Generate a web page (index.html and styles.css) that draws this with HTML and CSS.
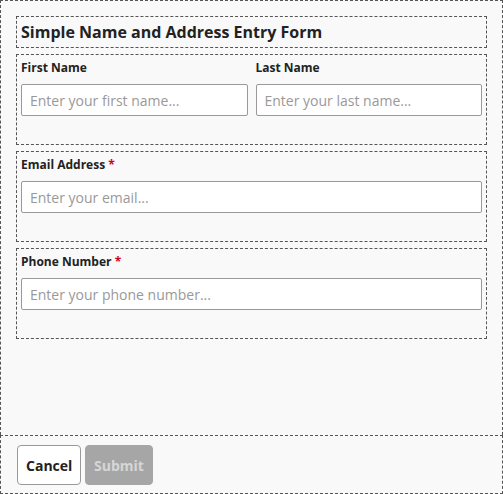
FILE: index.html
```html
<!DOCTYPE html>
<html>
<head>
<meta charset="utf-8">
<link rel="stylesheet" href="styles.css">
</head>
<body>
<div class="app">
  <main class="main">
    <div class="box title-box"><h1 class="title">Simple Name and Address Entry Form</h1></div>
    <div class="box field-box">
      <div class="row">
        <div class="field">
          <label class="label">First Name</label>
          <input class="input" type="text" placeholder="Enter your first name...">
        </div>
        <div class="field">
          <label class="label">Last Name</label>
          <input class="input" type="text" placeholder="Enter your last name...">
        </div>
      </div>
    </div>
    <div class="box field-box">
      <div class="field">
        <label class="label">Email Address <span class="req">*</span></label>
        <input class="input" type="text" placeholder="Enter your email...">
      </div>
    </div>
    <div class="box field-box">
      <div class="field">
        <label class="label">Phone Number <span class="req">*</span></label>
        <input class="input" type="text" placeholder="Enter your phone number...">
      </div>
    </div>
  </main>
  <footer class="footer">
    <button class="btn btn-cancel">Cancel</button>
    <button class="btn btn-submit" disabled>Submit</button>
  </footer>
</div>
</body>
</html>
```
FILE: styles.css
```css
* { box-sizing: border-box; }
html, body { margin: 0; padding: 0; }
body {
  background: #f9f9f9;
  font-family: "Open Sans", "Liberation Sans", sans-serif;
  color: #222;
}
.app {
  height: 494px;
  display: flex;
  flex-direction: column;
}
.main {
  flex: 1;
  border: 1px dashed #555;
  border-bottom: none;
  padding: 15px 15px 0 15px;
  display: flex;
  flex-direction: column;
  gap: 6px;
}
.box {
  border: 1px dashed #555;
}
.title-box {
  padding: 4px 4px 4px 4px;
}
.title {
  margin: 0;
  font-size: 16px;
  font-weight: 700;
  line-height: 22px;
  color: #222;
}
.field-box {
  padding: 4px 4px 28px 4px;
}
.row {
  display: flex;
  gap: 8px;
}
.field {
  flex: 1;
  display: flex;
  flex-direction: column;
}
.label {
  font-size: 12px;
  font-weight: 700;
  line-height: 17px;
  margin-bottom: 8px;
  color: #222;
}
.req { color: #d0021b; }
.input {
  height: 32px;
  border: 1px solid #999;
  border-radius: 2px;
  background: #fff;
  padding: 0 8px;
  font-family: "Open Sans", "Liberation Sans", sans-serif;
  font-size: 14px;
  color: #222;
  width: 100%;
}
.input::placeholder { color: #999; }
.footer {
  height: 59px;
  border: 1px dashed #555;
  padding: 9px 16px;
  display: flex;
  gap: 4px;
  align-items: flex-start;
}
.btn {
  height: 40px;
  border-radius: 4px;
  font-family: "Open Sans", "Liberation Sans", sans-serif;
  font-size: 14px;
  font-weight: 700;
  padding: 0 8px;
}
.btn-cancel {
  background: #fff;
  border: 1px solid #999;
  color: #222;
  width: 64px;
}
.btn-submit {
  background: #a6a6a6;
  border: 1px solid #a6a6a6;
  color: #d6d6d6;
  width: 68px;
}
```
